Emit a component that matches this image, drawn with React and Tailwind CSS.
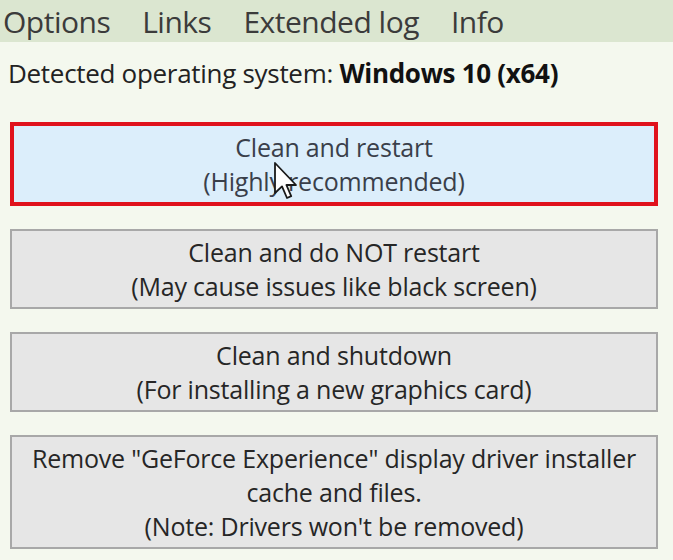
import React from 'react';

const font = { fontFamily: '"Open Sans", "Noto Sans", sans-serif' };

const Cursor = () => (
    <svg className="absolute left-[274px] top-[162px]" width="24" height="38" viewBox="0 0 12 19">
        <path d="M0.5 0.5 L0.5 15.5 L4 12.2 L6.5 18 L8.6 17.1 L6.2 11.5 L11 11.5 Z" fill="#ffffff" stroke="#1a1a1a" strokeWidth="0.9" strokeLinejoin="round" />
    </svg>
);

const Boton = ({ lines, active }) => (
    <div
        className={
            active
                ? 'border-[4px] border-[#e0121c] bg-[#dceefb] text-[#3a3f4a] text-center leading-[34px] text-[25px] py-[4px] tracking-[-0.2px]'
                : 'border-2 border-[#a8a8a8] bg-[#e6e6e6] text-[#262626] text-center leading-[34px] text-[25px] py-[4px] tracking-[-0.2px]'
        }
    >
        {lines.map((l, i) => (
            <div key={i}>{l}</div>
        ))}
    </div>
);

export default function App() {
    return (
        <div className="w-[673px] h-[560px] overflow-hidden bg-[#f4f8ee] relative" style={font}>
            {/* menu */}
            <div className="h-[42px] bg-[#dbe6d0] flex items-center gap-[32px] pl-[3px] text-[30px] text-[#3b3b3b] tracking-[-0.5px]">
                <span>Options</span>
                <span>Links</span>
                <span>Extended log</span>
                <span>Info</span>
            </div>

            <div className="px-[10px]">
                <p className="text-[26px] leading-[30px] text-[#222] mt-[16px] ml-[-2px] tracking-[-0.3px]">
                    Detected operating system: <span className="font-bold text-[#111]">Windows 10 (x64)</span>
                </p>

                <div className="flex flex-col gap-[23px] mt-[34px] w-[648px]">
                    <Boton active lines={['Clean and restart', '(Highly recommended)']} />
                    <Boton lines={['Clean and do NOT restart', '(May cause issues like black screen)']} />
                    <Boton lines={['Clean and shutdown', '(For installing a new graphics card)']} />
                    <Boton lines={['Remove "GeForce Experience" display driver installer', 'cache and files.', "(Note: Drivers won't be removed)"]} />
                </div>
            </div>
            <Cursor />
        </div>
    );
}
